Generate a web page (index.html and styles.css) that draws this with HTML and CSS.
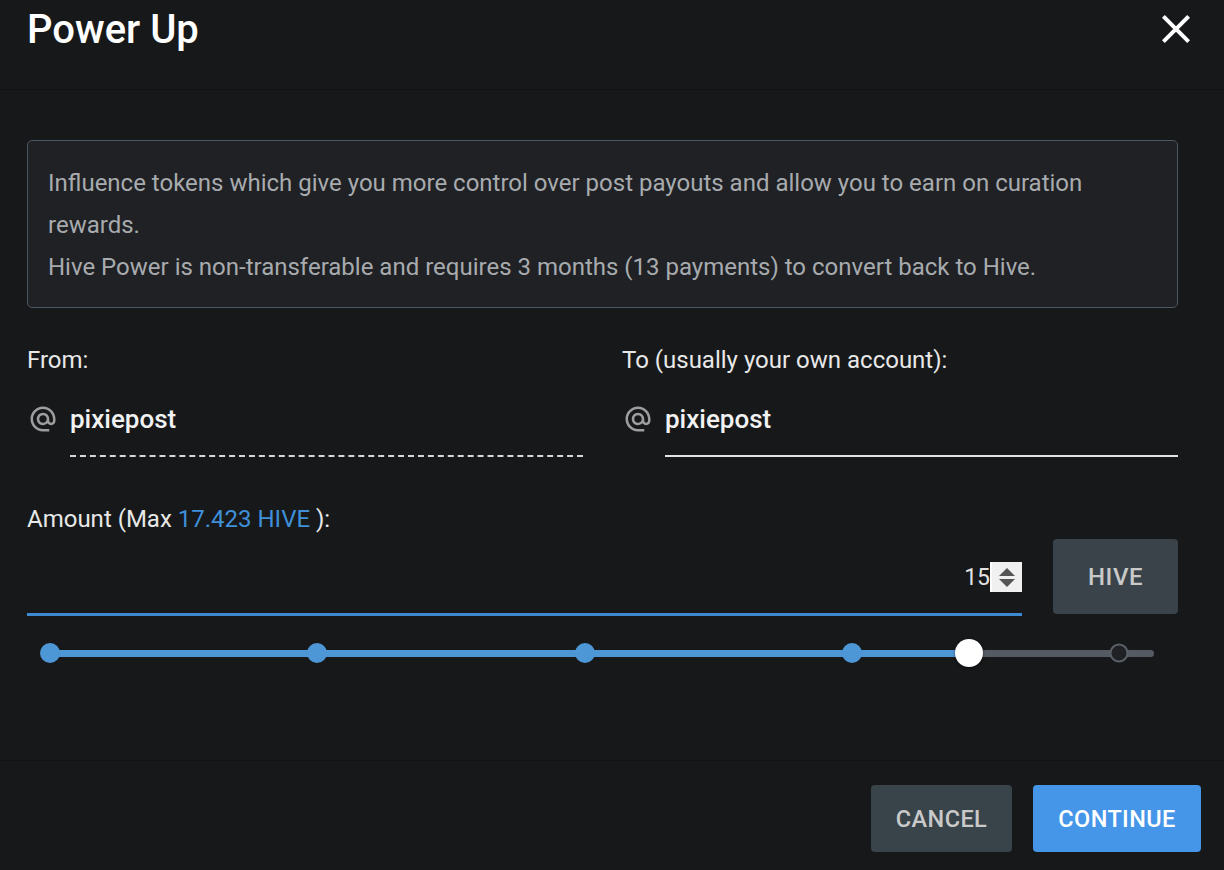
FILE: index.html
```html
<!DOCTYPE html>
<html lang="en">
<head>
<meta charset="utf-8">
<title>Power Up</title>
<link rel="stylesheet" href="styles.css">
</head>
<body>
<div class="dialog">
  <header class="dlg-header">
    <h1 class="dlg-title">Power Up</h1>
    <button class="close-btn" aria-label="Close">
      <svg viewBox="0 0 24 24" width="48" height="48"><path fill="#ffffff" d="M19 6.41L17.59 5 12 10.59 6.41 5 5 6.41 10.59 12 5 17.59 6.41 19 12 13.41 17.59 19 19 17.59 13.41 12z"/></svg>
    </button>
  </header>

  <main class="dlg-body">
    <div class="info-box">
      <p>Influence tokens which give you more control over post payouts and allow you to earn on curation rewards.</p>
      <p>Hive Power is non-transferable and requires 3 months (13 payments) to convert back to Hive.</p>
    </div>

    <div class="accounts">
      <div class="field">
        <div class="field-label">From:</div>
        <div class="acct-row">
          <svg class="at-icon" viewBox="0 0 24 24" width="30" height="30"><path fill="#9e9e9e" d="M12 1.95c-5.52 0-10 4.48-10 10s4.48 10 10 10h5v-2h-5c-4.34 0-8-3.66-8-8s3.66-8 8-8 8 3.66 8 8v1.43c0 .79-.71 1.57-1.5 1.57s-1.5-.78-1.5-1.57v-1.43c0-2.76-2.24-5-5-5s-5 2.24-5 5 2.24 5 5 5c1.38 0 2.64-.56 3.54-1.47.65.89 1.77 1.47 2.96 1.47 1.97 0 3.5-1.6 3.5-3.57v-1.43c0-5.52-4.48-10-10-10zm0 13c-1.66 0-3-1.34-3-3s1.34-3 3-3 3 1.34 3 3-1.34 3-3 3z"/></svg>
          <div class="acct-input dashed">pixiepost</div>
        </div>
      </div>
      <div class="field">
        <div class="field-label">To (usually your own account):</div>
        <div class="acct-row">
          <svg class="at-icon" viewBox="0 0 24 24" width="30" height="30"><path fill="#9e9e9e" d="M12 1.95c-5.52 0-10 4.48-10 10s4.48 10 10 10h5v-2h-5c-4.34 0-8-3.66-8-8s3.66-8 8-8 8 3.66 8 8v1.43c0 .79-.71 1.57-1.5 1.57s-1.5-.78-1.5-1.57v-1.43c0-2.76-2.24-5-5-5s-5 2.24-5 5 2.24 5 5 5c1.38 0 2.64-.56 3.54-1.47.65.89 1.77 1.47 2.96 1.47 1.97 0 3.5-1.6 3.5-3.57v-1.43c0-5.52-4.48-10-10-10zm0 13c-1.66 0-3-1.34-3-3s1.34-3 3-3 3 1.34 3 3-1.34 3-3 3z"/></svg>
          <div class="acct-input solid">pixiepost</div>
        </div>
      </div>
    </div>

    <div class="amount">
      <div class="field-label">Amount (Max <span class="max">17.423 HIVE</span> ):</div>
      <div class="amount-row">
        <div class="amount-input">
          <span class="amount-value">15</span><span class="caret"></span>
          <span class="spinner"><span class="tri up"></span><span class="tri down"></span></span>
        </div>
        <button class="unit-btn">HIVE</button>
      </div>
      <div class="slider">
        <div class="track"></div>
        <div class="fill" style="right: 14%"></div>
        <span class="dot on" style="left: 0%"></span>
        <span class="dot on" style="left: 25%"></span>
        <span class="dot on" style="left: 50%"></span>
        <span class="dot on" style="left: 75%"></span>
        <span class="dot off" style="left: 100%"></span>
        <span class="thumb" style="left: 86%"></span>
      </div>
    </div>
  </main>

  <footer class="dlg-footer">
    <button class="btn btn-cancel">CANCEL</button>
    <button class="btn btn-continue">CONTINUE</button>
  </footer>
</div>
</body>
</html>
```

FILE: styles.css
```css
* { box-sizing: border-box; }

html, body {
  margin: 0;
  padding: 0;
  background: #17181a;
}

body {
  font-family: Roboto, "Liberation Sans", Arial, sans-serif;
  color: #e8e8e8;
}

.dialog {
  width: 1224px;
  height: 870px;
  display: flex;
  flex-direction: column;
  background: #17181a;
  overflow: hidden;
}

.dlg-header {
  height: 90px;
  flex: none;
  display: flex;
  align-items: flex-start;
  justify-content: space-between;
  padding: 6px 24px 0 27px;
  border-bottom: 1px solid #111214;
}

.dlg-title {
  margin: 0;
  font-size: 40px;
  line-height: 47px;
  font-weight: 500;
  color: #ffffff;
}

.close-btn {
  margin-top: -1px;
  padding: 0;
  border: 0;
  background: transparent;
  width: 48px;
  height: 48px;
  display: flex;
}

.dlg-body {
  flex: 1;
  padding: 50px 46px 0 27px;
}

.info-box {
  border: 1px solid #4b5660;
  border-radius: 5px;
  background: #1f2125;
  padding: 21px 20px 18px 20px;
  color: #a8abae;
  font-size: 24px;
  line-height: 42px;
  height: 168px;
}

.info-box p {
  margin: 0;
}

.accounts {
  display: grid;
  grid-template-columns: 1fr 1fr;
  column-gap: 39px;
  margin-top: 37px;
}

.field-label {
  font-size: 24px;
  line-height: 30px;
  color: #e8e8e8;
}

.acct-row {
  display: flex;
  align-items: flex-start;
  margin-top: 24px;
}

.at-icon {
  flex: none;
  margin: 5px 12px 0 1px;
}

.acct-input {
  flex: 1;
  font-size: 26px;
  font-weight: 500;
  line-height: 40px;
  height: 58px;
  padding-bottom: 16px;
  color: #f2f2f2;
}

.acct-input.dashed {
  border-bottom: 2px dashed #d8d8d8;
}

.acct-input.solid {
  border-bottom: 2px solid #e2e2e2;
}

.amount {
  margin-top: 47px;
}

.amount .max {
  color: #3f8fd9;
}

.amount-row {
  display: flex;
  gap: 31px;
  margin-top: 5px;
}

.amount-input {
  flex: 1;
  height: 77px;
  border-bottom: 3px solid #3d8ad2;
  display: flex;
  align-items: center;
  justify-content: flex-end;
}

.amount-value {
  font-size: 23px;
  color: #e2e2e2;
  line-height: 30px;
  margin-top: 4px;
}

.caret {
  width: 2px;
  height: 30px;
  background: #ffffff;
  margin-top: 2px;
}

.spinner {
  width: 30px;
  height: 30px;
  margin-top: 2px;
  background: #f0f0f0;
  display: flex;
  flex-direction: column;
  align-items: center;
  justify-content: center;
  gap: 3px;
}

.tri {
  width: 0;
  height: 0;
  border-left: 8px solid transparent;
  border-right: 8px solid transparent;
}

.tri.up {
  border-bottom: 8px solid #555555;
}

.tri.down {
  border-top: 8px solid #555555;
}

.unit-btn {
  width: 125px;
  height: 75px;
  border: 0;
  border-radius: 4px;
  background: #394349;
  color: #c9c9c9;
  font-family: Roboto, "Liberation Sans", Arial, sans-serif;
  font-size: 24px;
  font-weight: 500;
  letter-spacing: 0.5px;
  padding-top: 2px;
}

.slider {
  position: relative;
  height: 40px;
  margin: 17px 59px 0 23px;
}

.track,
.fill {
  position: absolute;
  top: 16.5px;
  height: 7px;
  border-radius: 4px;
}

.track {
  left: -8px;
  right: -35px;
  background: #555b62;
}

.fill {
  left: -8px;
  background: #4e97d7;
  border-radius: 4px 0 0 4px;
}

.dot {
  position: absolute;
  top: 20px;
  width: 20px;
  height: 20px;
  border-radius: 50%;
  transform: translate(-50%, -50%);
}

.dot.on {
  background: #4e97d7;
}

.dot.off {
  width: 19px;
  height: 19px;
  background: #1f2125;
  border: 2px solid #5a6067;
}

.thumb {
  position: absolute;
  top: 20px;
  width: 28px;
  height: 28px;
  border-radius: 50%;
  background: #ffffff;
  transform: translate(-50%, -50%);
  box-shadow: 0 1px 3px rgba(0, 0, 0, 0.5);
}

.dlg-footer {
  flex: none;
  height: 110px;
  border-top: 1px solid #111214;
  display: flex;
  justify-content: flex-end;
  align-items: flex-start;
  gap: 21px;
  padding: 24px 23px 0 0;
}

.btn {
  height: 67px;
  border: 0;
  border-radius: 4px;
  font-family: Roboto, "Liberation Sans", Arial, sans-serif;
  font-size: 23.5px;
  font-weight: 500;
  letter-spacing: 0.4px;
  padding-top: 2px;
}

.btn-cancel {
  width: 141px;
  background: #38434a;
  color: #c9c9c9;
}

.btn-continue {
  width: 168px;
  background: #4596e8;
  color: #ffffff;
}
```
